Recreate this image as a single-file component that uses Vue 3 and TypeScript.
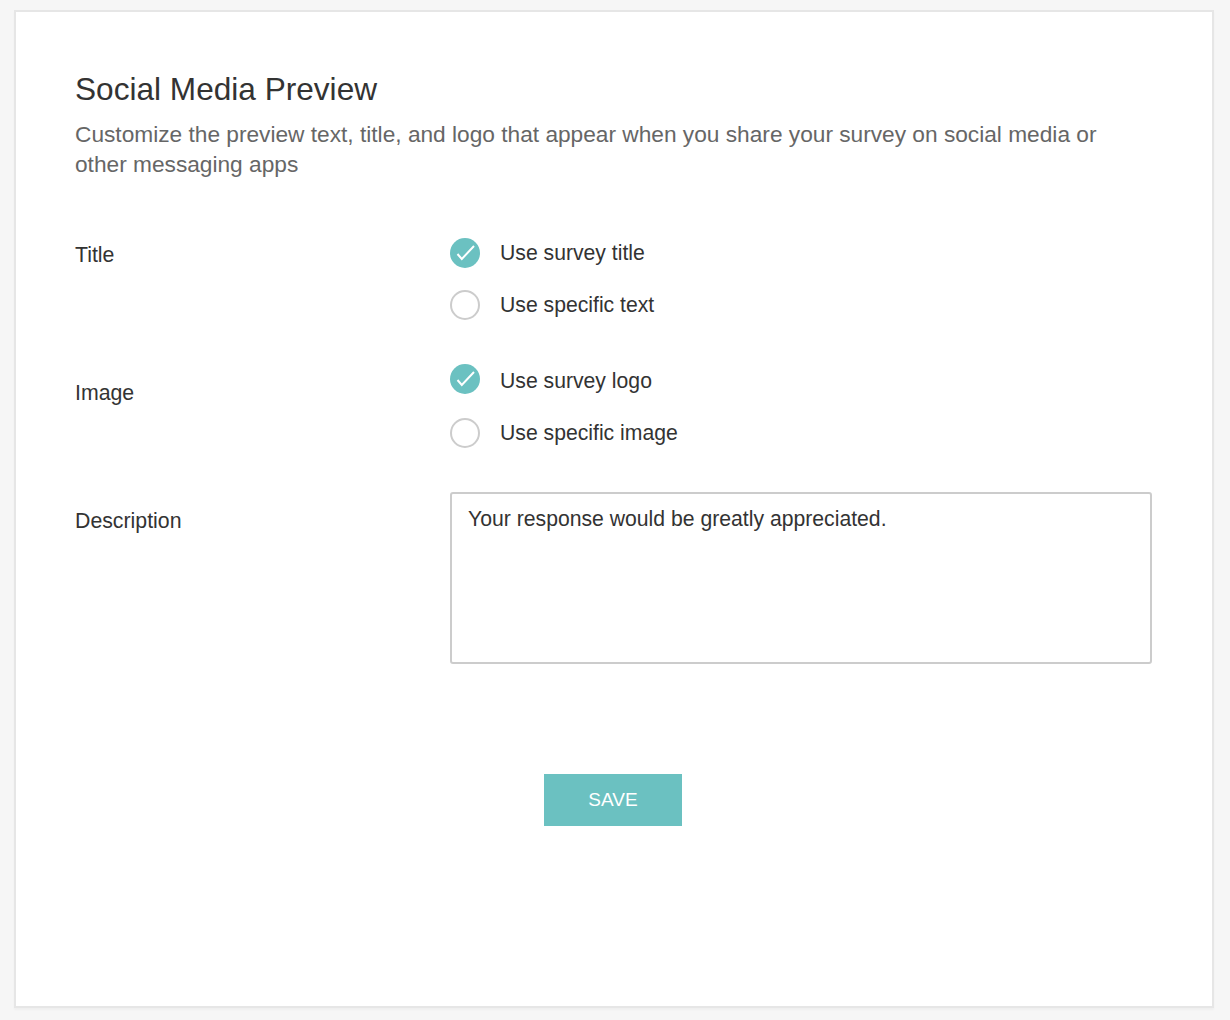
<script setup lang="ts">
interface Choice { label: string; checked: boolean }
interface Group { label: string; cls: string; choices: Choice[] }
const groups: Group[] = [
  { label: 'Title', cls: 'row-title', choices: [{ label: 'Use survey title', checked: true }, { label: 'Use specific text', checked: false }] },
  { label: 'Image', cls: 'row-image', choices: [{ label: 'Use survey logo', checked: true }, { label: 'Use specific image', checked: false }] },
]
</script>

<template>
  <div class="page">
    <main class="card">
      <h1 class="title">Social Media Preview</h1>
      <p class="subtitle">Customize the preview text, title, and logo that appear when you share your survey on social media or other messaging apps</p>
      <div class="form">
        <section v-for="g in groups" :key="g.label" class="row" :class="g.cls">
          <div class="label">{{ g.label }}</div>
          <div class="choices">
            <div v-for="c in g.choices" :key="c.label" class="choice">
              <span class="radio" :class="{ on: c.checked }">
                <svg v-if="c.checked" viewBox="0 0 30 30" width="30" height="30"><path d="M7.5 16 L11.8 21 L24 8" fill="none" stroke="#fff" stroke-width="2" /></svg>
              </span>
              <span class="choice-text">{{ c.label }}</span>
            </div>
          </div>
        </section>
        <section class="row desc-row">
          <div class="label">Description</div>
          <div class="textarea">Your response would be greatly appreciated.</div>
        </section>
      </div>
      <div class="actions"><button class="save" type="button">SAVE</button></div>
    </main>
  </div>
</template>

<style>
html, body { margin: 0; background: #f6f6f6; }
</style>

<style scoped>
.page {
  box-sizing: border-box;
  height: 1020px;
  padding: 10px 16px 12px 14px;
  background: #f6f6f6;
  font-family: "Liberation Sans", Arial, sans-serif;
}
.card {
  box-sizing: border-box;
  height: 998px;
  background: #fff;
  border: 2px solid #e6e6e6;
  box-shadow: 0 2px 2px rgba(0, 0, 0, 0.03);
  padding: 58px 60px 0 59px;
}
.title {
  margin: 0;
  font-size: 31.6px;
  line-height: 38px;
  font-weight: 400;
  color: #333;
}
.subtitle {
  margin: 11px 0 0;
  max-width: 1040px;
  font-size: 22.7px;
  line-height: 30px;
  color: #666;
}
.form { margin-top: 59px; }
.row { display: flex; align-items: flex-start; }
.row-title { margin-bottom: 46px; }
.row-image { margin-bottom: 44px; }
.label {
  width: 375px;
  flex: none;
  font-size: 21.3px;
  line-height: 30px;
  color: #333;
}
.row-title .label { padding-top: 2px; }
.row-image .label { padding-top: 12px; }
.desc-row .label { padding-top: 14px; }
.choices { display: flex; flex-direction: column; gap: 22px; }
.choice { display: flex; align-items: center; gap: 20px; height: 30px; }
.radio {
  box-sizing: border-box;
  width: 30px;
  height: 30px;
  border-radius: 50%;
  border: 2px solid #ccc;
  background: #fff;
  flex: none;
}
.radio.on { background: #6bc1c1; border: 0; }
.row-image .radio.on { margin-bottom: 4px; }
.radio svg { display: block; }
.choice-text { font-size: 21.2px; line-height: 30px; color: #333; }
.textarea {
  box-sizing: border-box;
  width: 702px;
  height: 172px;
  border: 2px solid #ccc;
  border-radius: 3px;
  padding: 10px 16px;
  font-size: 21.2px;
  line-height: 30px;
  color: #333;
}
.actions { margin-top: 110px; padding-left: 469px; }
.save {
  display: block;
  width: 138px;
  height: 52px;
  border: 0;
  padding: 0;
  background: #6bc1c1;
  color: #fff;
  font-family: inherit;
  font-size: 19px;
}
</style>
